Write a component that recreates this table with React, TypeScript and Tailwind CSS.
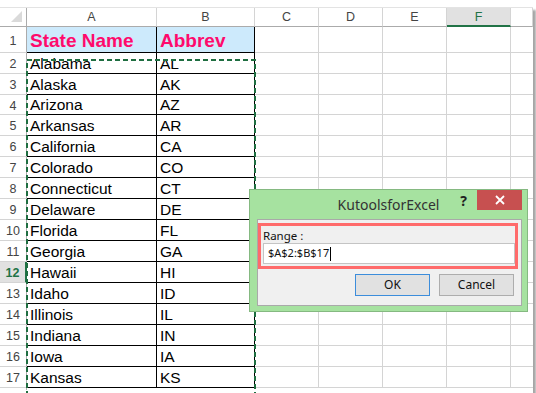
import React from "react";

const states: [string, string][] = [
  ["Alabama", "AL"],
  ["Alaska", "AK"],
  ["Arizona", "AZ"],
  ["Arkansas", "AR"],
  ["California", "CA"],
  ["Colorado", "CO"],
  ["Connecticut", "CT"],
  ["Delaware", "DE"],
  ["Florida", "FL"],
  ["Georgia", "GA"],
  ["Hawaii", "HI"],
  ["Idaho", "ID"],
  ["Illinois", "IL"],
  ["Indiana", "IN"],
  ["Iowa", "IA"],
  ["Kansas", "KS"],
];

// widths include the 1px right grid line
const cols = [
  { key: "A", w: "w-[130px]" },
  { key: "B", w: "w-[98px]" },
  { key: "C", w: "w-[64px]" },
  { key: "D", w: "w-[64px]" },
  { key: "E", w: "w-[64px]" },
  { key: "F", w: "w-[64px]" },
  { key: "", w: "w-[22px]" },
];

function RowHeader({ n, h, active }: { n: number; h: string; active?: boolean }) {
  return (
    <div
      className={`w-[27px] shrink-0 ${h} flex items-center justify-center pt-[3px] border-b border-[#d4d4d4] ${
        active
          ? "bg-[#e1e1e1] text-[#217346] font-bold border-r-2 border-r-[#217346]"
          : "text-[#444] border-r border-r-[#ababab]"
      } text-[12.5px]`}
    >
      {n}
    </div>
  );
}

function ColumnHeaders() {
  return (
    <div className="flex mt-[7px] h-[20px] border-t border-[#e3e3e3]">
      <div className="w-[27px] shrink-0 border-r border-b border-[#ababab]">
        <svg viewBox="0 0 26 18" className="block w-[26px] h-[18px]">
          <polygon points="22,3 11,14 22,14" fill="#dadada" />
        </svg>
      </div>
      {cols.map((c) => (
        <div
          key={c.key || "g"}
          className={`${c.w} shrink-0 flex items-center justify-center text-[12.5px] ${
            c.key === "F"
              ? "bg-[#e1e1e1] text-[#217346] border-b-2 border-b-[#217346] border-r border-r-[#d4d4d4] pt-[1px]"
              : "text-[#444] border-b border-b-[#ababab] border-r border-r-[#d4d4d4]"
          }`}
        >
          {c.key}
        </div>
      ))}
    </div>
  );
}

function Row({ n, h, a, b, head, active }: { n: number; h: string; a?: string; b?: string; head?: boolean; active?: boolean }) {
  const text = head ? "text-[19px] font-bold text-[#ff0a6c]" : "text-[15.5px] text-black";
  const fill = head ? "bg-[#cdeafc]" : "";
  return (
    <div className="flex">
      <RowHeader n={n} h={h} active={active} />
      <div className={`w-[130px] shrink-0 ${h} border-r border-b border-black flex items-end pl-[3px] leading-[1.15] ${text} ${fill}`}>
        {a}
      </div>
      <div className={`w-[98px] shrink-0 ${h} border-r border-b border-black flex items-end pl-[3px] leading-[1.15] ${text} ${fill}`}>
        {b}
      </div>
      {cols.slice(2).map((c, i) => (
        <div key={i} className={`${c.w} shrink-0 ${h} border-b border-[#d4d4d4] ${i < 4 ? "border-r" : ""}`} />
      ))}
    </div>
  );
}

function KutoolsDialog() {
  return (
    <div
      className="absolute left-[249px] top-[182px] w-[279px] h-[123px] bg-[#a6e2a0] border border-[#85b981] flex flex-col"
      style={{ fontFamily: '"Noto Sans", "Open Sans", sans-serif' }}
    >
      <div className="h-[29px] grid grid-cols-[1fr_auto_1fr]">
        <div />
        <div className="text-[14px] text-[#333] pt-[6px] leading-[18px]">KutoolsforExcel</div>
        <div className="flex justify-end items-start pr-[5px]">
          <span className="text-[14px] font-bold text-[#222] mt-[2px] mr-[10px] leading-[18px]">?</span>
          <div className="w-[45px] h-[20px] bg-[#c75050] flex items-center justify-center">
            <svg viewBox="0 0 10 10" className="w-[10px] h-[10px]">
              <path d="M1 1 L9 9 M9 1 L1 9" stroke="#fff" strokeWidth="1.8" />
            </svg>
          </div>
        </div>
      </div>
      <div className="flex-1 ml-[7px] mr-[5px] mb-[5px] bg-[#f0f0f0] border border-[#a9a9a9] flex flex-col">
        <div className="mt-[3px] w-[260px] h-[46px] border-[3px] border-[#ff6b6b] flex flex-col pl-[2px]">
          <div className="h-[17px] text-[11.5px] text-[#111] leading-[17px] pt-[1px]">Range :</div>
          <div className="h-[21px] bg-white border border-[#c4c4c4] flex items-center pl-[4px] text-[11px] text-[#111]">
            $A$2:$B$17
            <span className="inline-block w-px h-[14px] bg-black ml-px" />
          </div>
        </div>
        <div className="flex justify-end gap-[9px] pr-[7px] mt-[5px]">
          <button className="w-[75px] h-[22px] bg-[#e1e1e1] border border-[#3c8ddb] text-[12px] text-[#111]">OK</button>
          <button className="w-[75px] h-[22px] bg-[#e1e1e1] border border-[#adadad] text-[12px] text-[#111]">Cancel</button>
        </div>
      </div>
    </div>
  );
}

export default function App() {
  const heights = ["h-[21px]", "h-[21px]", "h-[20px]"];
  return (
    <div className="w-[536px] h-[393px] bg-white overflow-hidden">
      <div
        className="relative w-[533px] h-[389px] bg-white shadow-[3px_3px_2px_rgba(0,0,0,0.35)]"
        style={{ fontFamily: '"Liberation Sans", Arial, sans-serif' }}
      >
        <ColumnHeaders />
        <Row n={1} h="h-[26px]" a="State Name" b="Abbrev" head />
        {states.map(([a, b], i) => (
          <Row key={a} n={i + 2} h={i < 3 ? heights[i] : "h-[21px]"} a={a} b={b} active={i + 2 === 12} />
        ))}
        <div className="flex">
          <div className="w-[27px] h-[2px] border-r border-[#ababab]" />
        </div>

        {/* copy marquee round A2:B17 */}
        <svg
          viewBox="0 0 232 340"
          className="absolute left-[25px] top-[51px] w-[232px] h-[340px] max-w-none"
          shapeRendering="crispEdges"
        >
          <rect x="2" y="2" width="228" height="336" fill="none" stroke="#1f6e41" strokeWidth="2" strokeDasharray="5 3" />
        </svg>

        <KutoolsDialog />
      </div>
    </div>
  );
}
